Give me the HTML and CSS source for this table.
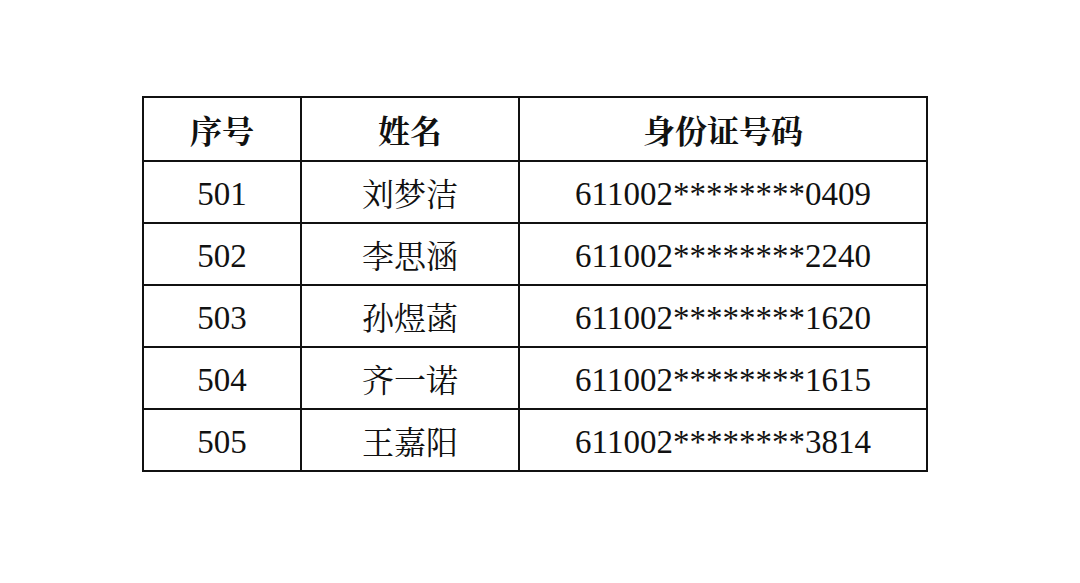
FILE: index.html
```html
<!DOCTYPE html>
<html lang="zh-CN">
<head>
<meta charset="utf-8">
<title>名单</title>
<link rel="stylesheet" href="styles.css">
</head>
<body>
<table class="roster">
  <colgroup>
    <col class="c-no">
    <col class="c-name">
    <col class="c-id">
  </colgroup>
  <thead>
    <tr class="head-row">
      <th>序号</th>
      <th>姓名</th>
      <th>身份证号码</th>
    </tr>
  </thead>
  <tbody>
    <tr><td>501</td><td class="name">刘梦洁</td><td>611002********0409</td></tr>
    <tr><td>502</td><td class="name">李思涵</td><td>611002********2240</td></tr>
    <tr><td>503</td><td class="name">孙煜菡</td><td>611002********1620</td></tr>
    <tr><td>504</td><td class="name">齐一诺</td><td>611002********1615</td></tr>
    <tr><td>505</td><td class="name">王嘉阳</td><td>611002********3814</td></tr>
  </tbody>
</table>
</body>
</html>
```

FILE: styles.css
```css
html, body {
  margin: 0;
  padding: 0;
  background: #ffffff;
}

body {
  padding: 96px 0 0 142px;
  color: #111111;
  font-family: "Liberation Serif", "Noto Serif CJK SC", "Noto Sans CJK SC", serif;
}

.roster {
  border-collapse: collapse;
  table-layout: fixed;
  width: 784px;
  border: 2px solid #111111;
}

.c-no { width: 158px; }
.c-name { width: 218px; }
.c-id { width: 408px; }

.roster th,
.roster td {
  border: 2px solid #111111;
  padding: 0;
  text-align: center;
  vertical-align: middle;
  font-size: 33px;
  line-height: 1;
}

.roster th {
  font-family: "Noto Serif CJK SC", "Noto Sans CJK SC", sans-serif;
  font-weight: 700;
  font-size: 32px;
}

.head-row {
  height: 64px;
}

.roster tbody tr {
  height: 62px;
}

.roster td {
  padding-top: 4px;
}

.roster td.name {
  font-family: "Noto Serif CJK SC", "Noto Sans CJK SC", sans-serif;
  font-size: 32px;
  padding-top: 0;
}
```
